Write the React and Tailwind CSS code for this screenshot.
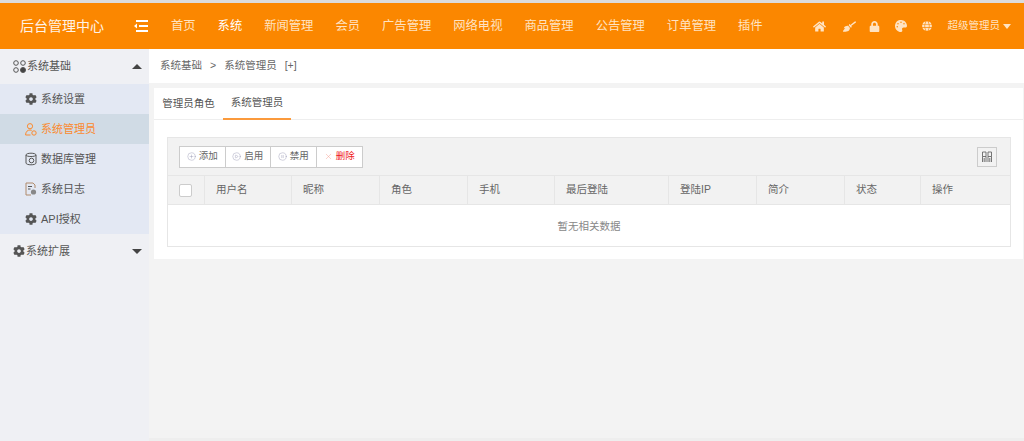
import { CirclePlus, CirclePlay, CirclePause, X } from "lucide-react";
import { FaHome, FaBroom, FaLock, FaPalette, FaCog, FaGlobe } from "react-icons/fa";

const font = "font-['Liberation_Sans','Noto_Sans_CJK_SC',sans-serif]";

const navItems = ["首页", "系统", "新闻管理", "会员", "广告管理", "网络电视", "商品管理", "公告管理", "订单管理", "插件"];
const columns = ["用户名", "昵称", "角色", "手机", "最后登陆", "登陆IP", "简介", "状态", "操作"];

function UserGear() {
  return (
    <svg width="12" height="13" viewBox="0 0 12 13" fill="none" stroke="currentColor" strokeWidth="1">
      <circle cx="5" cy="3.2" r="2.6" />
      <path d="M0.6 12 C0.6 8.6 2.6 7 5 7 C5.6 7 6.2 7.1 6.7 7.3 M0.6 12 H5.5" />
      <circle cx="9" cy="10" r="2.2" />
    </svg>
  );
}

function DbGear() {
  return (
    <svg width="12" height="14" viewBox="0 0 12 14" fill="none" stroke="currentColor" strokeWidth="1">
      <path d="M1 3 C1 0.6 11 0.6 11 3 V11 C11 13.4 1 13.4 1 11 Z" />
      <path d="M1 3 C1 5 11 5 11 3" />
      <circle cx="6.5" cy="8.5" r="2.3" />
    </svg>
  );
}

function LogGear() {
  return (
    <svg width="12" height="14" viewBox="0 0 12 14" fill="none" stroke="currentColor" strokeWidth="1">
      <path d="M6 13 H1 V1 H8 L10 3 V6" stroke="#b08a6a" />
      <path d="M3 4.5 H7 M3 7 H5.5" />
      <circle cx="8.5" cy="10" r="2.6" fill="#888" stroke="none" />
    </svg>
  );
}

function SolidCog() {
  return <FaCog size={12} />;
}

function Caret({ up }) {
  return (
    <span
      className={
        up
          ? "w-0 h-0 border-x-[5px] border-x-transparent border-b-[5px] border-b-[#444]"
          : "w-0 h-0 border-x-[5px] border-x-transparent border-t-[5px] border-t-[#444]"
      }
    />
  );
}

function SideItem({ icon: Icon, label, active }) {
  return (
    <div
      className={
        active
          ? "h-[30px] flex items-center pl-[25px] gap-[4px] bg-[#d0dbe5] text-[#fb8a2e]"
          : "h-[30px] flex items-center pl-[25px] gap-[4px] text-[#555]"
      }
    >
      <Icon />
      <span>{label}</span>
    </div>
  );
}

function ToolButton({ icon: Icon, label, danger, last }) {
  return (
    <div
      className={
        last
          ? "w-[45.5px] h-full flex items-center justify-center gap-[3px] text-[#f01818]"
          : "w-[45.5px] h-full flex items-center justify-center gap-[3px] border-r border-[#ccc] text-[#666]"
      }
    >
      <Icon size={9} strokeWidth={1} className={danger ? "text-[#f58a7a]" : "text-[#88a]"} />
      <span>{label}</span>
    </div>
  );
}

export default function App() {
  return (
    <div className={`${font} w-[1024px] h-[441px] overflow-hidden flex flex-col bg-[#f3f3f3] text-[11px]`}>
      <div className="h-[3px] bg-[#dcdcdc]" />
      <header className="h-[46px] bg-[#fb8700] flex items-center text-[#ffe3c2]">
        <div className="w-[134px] pl-[20px] text-[14px] text-[#fff3e6]">后台管理中心</div>
        <svg width="14" height="12" viewBox="0 0 14 12" className="mr-[23px] text-white" fill="currentColor">
          <rect x="2" y="0" width="12" height="2" />
          <rect x="5" y="5" width="9" height="2" />
          <rect x="2" y="10" width="12" height="2" />
          <path d="M0 6 L3 3.5 V8.5 Z" />
        </svg>
        <nav className="flex gap-[22px] text-[12.3px]">
          {navItems.map((item) => (
            <span key={item} className={item === "系统" ? "text-white" : ""}>
              {item}
            </span>
          ))}
        </nav>
        <div className="ml-auto flex items-center pr-[13px] text-[#ffe3c2]">
          <FaHome size={13} className="mr-[17px]" />
          <FaBroom size={13} className="mr-[13px]" />
          <FaLock size={11} className="mr-[15px]" />
          <FaPalette size={12} className="mr-[15px]" />
          <FaGlobe size={10} className="mr-[16px]" />
          <span className="text-[10.5px] mr-[3px]">超级管理员</span>
          <span className="w-0 h-0 border-x-[4px] border-x-transparent border-t-[5px] border-t-[#ffe3c2]" />
        </div>
      </header>

      <div className="flex-1 flex">
        <aside className="w-[149px] bg-[#eff0f4] text-[#555]">
          <div className="h-[35px] flex items-center pl-[13px] pr-[7px] gap-[1px]">
            <svg width="13" height="13" viewBox="0 0 13 13" fill="none" stroke="#555" strokeWidth="1">
              <circle cx="3" cy="3" r="2.3" />
              <circle cx="10" cy="3" r="2.3" />
              <circle cx="3" cy="10" r="2.3" />
              <circle cx="10" cy="10" r="2.5" fill="#444" />
            </svg>
            <span>系统基础</span>
            <span className="ml-auto flex"><Caret up /></span>
          </div>
          <div className="bg-[#e3e8f3]">
            <SideItem icon={SolidCog} label="系统设置" />
            <SideItem icon={UserGear} label="系统管理员" active />
            <SideItem icon={DbGear} label="数据库管理" />
            <SideItem icon={LogGear} label="系统日志" />
            <SideItem icon={SolidCog} label="API授权" />
          </div>
          <div className="h-[34px] flex items-center pl-[13px] pr-[7px] gap-[1px]">
            <FaCog size={12} />
            <span>系统扩展</span>
            <span className="ml-auto flex"><Caret /></span>
          </div>
        </aside>

        <main className="flex-1 min-w-0 flex flex-col">
          <div className="h-[34px] bg-white flex items-center pl-[11px] text-[10.5px] text-[#666] gap-[8px]">
            <span>系统基础</span>
            <span>&gt;</span>
            <span>系统管理员</span>
            <span>[+]</span>
          </div>
          <section className="mt-[5px] ml-[5px] mr-px h-[171px] bg-white">
            <div className="h-[32px] border-b border-[#eee] flex text-[10.5px] text-[#555]">
              <div className="w-[69px] flex items-center justify-center">管理员角色</div>
              <div className="w-[68px] flex items-center justify-center border-b-2 border-[#fb9a3c] h-[32px]">系统管理员</div>
            </div>
            <div className="mt-[17px] mx-[13px] mr-[12px] border border-[#e6e6e6]">
              <div className="h-[38px] bg-[#f2f2f2] border-b border-[#e6e6e6] flex items-center justify-between pl-[11px] pr-[13px]">
                <div className="h-[22px] flex bg-white border border-[#ccc] text-[9.5px]">
                  <ToolButton icon={CirclePlus} label="添加" />
                  <ToolButton icon={CirclePlay} label="启用" />
                  <ToolButton icon={CirclePause} label="禁用" />
                  <ToolButton icon={X} label="删除" danger last />
                </div>
                <div className="w-[20px] h-[20px] border border-[#ccc] flex items-center justify-center text-[#666]">
                  <svg width="12" height="12" viewBox="0 0 12 12" fill="none" stroke="currentColor" strokeWidth="0.9">
                    <path d="M1.5 5.5 V1 H5 V5.5 Z M7 5.5 V1 H10.5 V5.5 Z M1.5 5.5 V11 M5 5.5 V11 M7 5.5 V11 M10.5 5.5 V11 M3.2 7 V11 M8.8 7 V11" />
                  </svg>
                </div>
              </div>
              <div className="h-[29px] bg-[#f2f2f2] border-b border-[#e6e6e6] grid grid-cols-[37px_87px_88px_88px_87px_114px_88px_88px_76px_1fr] text-[10.5px] text-[#666]">
                <div className="flex items-center pl-[11px] border-r border-[#e6e6e6]">
                  <span className="w-[13px] h-[13px] bg-white border border-[#ccc] rounded-[2px]" />
                </div>
                {columns.map((col) => (
                  <div key={col} className="flex items-center pl-[11px] border-r border-[#e6e6e6] last:border-r-0">
                    {col}
                  </div>
                ))}
              </div>
              <div className="h-[41px] pt-[2px] bg-white flex items-center justify-center text-[10.5px] text-[#888]">暂无相关数据</div>
            </div>
          </section>
          <div className="mt-auto h-[3px] bg-[#eeeeee]" />
        </main>
      </div>
    </div>
  );
}
